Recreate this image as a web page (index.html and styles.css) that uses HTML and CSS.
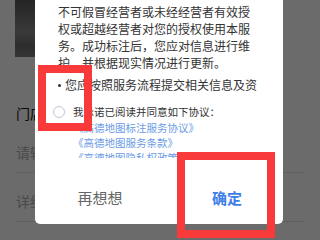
FILE: index.html
```html
<!DOCTYPE html>
<html lang="zh-CN">
<head>
<meta charset="utf-8">
<title>标注确认</title>
<link rel="stylesheet" href="styles.css">
</head>
<body>
<div class="page">
  <div class="thumb"></div>
  <div class="label-row">门店名称</div>
  <div class="input-row">请输入门店名称</div>
  <div class="addr-row">详细地址</div>
</div>
<div class="mask"></div>
<div class="dialog">
  <div class="scroll">
    <p class="para">不可假冒经营者或未经经营者有效授权或超越经营者对您的授权使用本服务。成功标注后，您应对信息进行维护，并根据现实情况进行更新。</p>
    <p class="para item">您应按照服务流程提交相关信息及资料，并保证所提交的信息真实、准确、完整。</p>
  </div>
  <div class="agree">
    <span class="radio"></span>
    <span class="agree-text">我承诺已阅读并同意如下协议：</span>
  </div>
  <div class="links">
    <div class="link">《高德地图标注服务协议》</div>
    <div class="link">《高德地图服务条款》</div>
    <div class="link">《高德地图隐私权政策》</div>
  </div>
  <div class="actions">
    <div class="btn btn-cancel">再想想</div>
    <div class="btn btn-ok">确定</div>
  </div>
</div>
<div class="mark mark-1"></div>
<div class="mark mark-2"></div>
</body>
</html>
```
FILE: styles.css
```css
html, body {
  margin: 0;
  padding: 0;
}
body {
  width: 320px;
  height: 240px;
  overflow: hidden;
  position: relative;
  background: #ffffff;
  font-family: "Noto Sans CJK SC", "Noto Sans", sans-serif;
}
.page {
  padding: 0 16px;
}
.thumb {
  width: 90px;
  height: 57px;
  margin-left: -1px;
  background: linear-gradient(180deg, #5a5a5a 0%, #707070 30%, #8a8a8a 55%, #6c6c6c 80%, #7c7c7c 100%);
}
.label-row {
  margin-top: 43px;
  height: 26px;
  line-height: 26px;
  font-size: 14px;
  color: #111;
}
.input-row {
  margin-top: 6px;
  height: 40px;
  line-height: 40px;
  font-size: 14px;
  color: #b0b0b0;
  border-bottom: 1px solid #e2e2e2;
}
.addr-row {
  height: 49px;
  box-sizing: border-box;
  padding-top: 19px;
  line-height: 18px;
  font-size: 14px;
  color: #b0b0b0;
  border-bottom: 1px solid #e2e2e2;
}
.mask {
  position: absolute;
  inset: 0;
  background: rgba(0, 0, 0, 0.58);
}
.dialog {
  position: absolute;
  left: 35px;
  top: -20px;
  width: 248px;
  height: 244px;
  background: #fff;
  border-radius: 5px;
  display: flex;
  flex-direction: column;
}
.scroll {
  height: 114px;
  box-sizing: border-box;
  padding: 23px 23px 0 23px;
  overflow: hidden;
  flex-shrink: 0;
}
.para {
  margin: 0;
  font-size: 12px;
  line-height: 17px;
  color: #333;
}
.item {
  margin-top: 5px;
}
.item::before {
  content: "";
  display: inline-block;
  width: 3px;
  height: 3px;
  border-radius: 50%;
  background: #333;
  margin-right: 4px;
  vertical-align: middle;
  position: relative;
  top: -1px;
}
.agree {
  margin-top: 10px;
  padding-left: 18px;
  display: flex;
  align-items: center;
  gap: 8px;
  height: 15px;
  flex-shrink: 0;
}
.radio {
  width: 12px;
  height: 12px;
  box-sizing: border-box;
  border: 1px solid #c3c8d3;
  border-radius: 50%;
}
.agree-text {
  font-size: 10.5px;
  line-height: 15px;
  color: #333;
}
.links {
  margin-top: 1px;
  height: 38px;
  overflow: hidden;
  padding-left: 38px;
  flex-shrink: 0;
}
.link {
  font-size: 10.5px;
  line-height: 15px;
  color: #6b9be6;
}
.actions {
  margin-top: auto;
  height: 53px;
  display: grid;
  grid-template-columns: 130px 118px;
  align-items: center;
}
.btn {
  text-align: center;
  font-size: 15px;
  line-height: 20px;
}
.btn-cancel {
  color: #666;
}
.btn-ok {
  color: #3d7fe6;
  font-weight: 600;
  padding-left: 6px;
}
.mark {
  position: absolute;
  box-sizing: border-box;
  border: 8px solid #f83a3a;
}
.mark-1 {
  left: 38px;
  top: 65px;
  width: 54px;
  height: 66px;
}
.mark-2 {
  left: 177px;
  top: 152px;
  width: 98px;
  height: 86px;
}
```
